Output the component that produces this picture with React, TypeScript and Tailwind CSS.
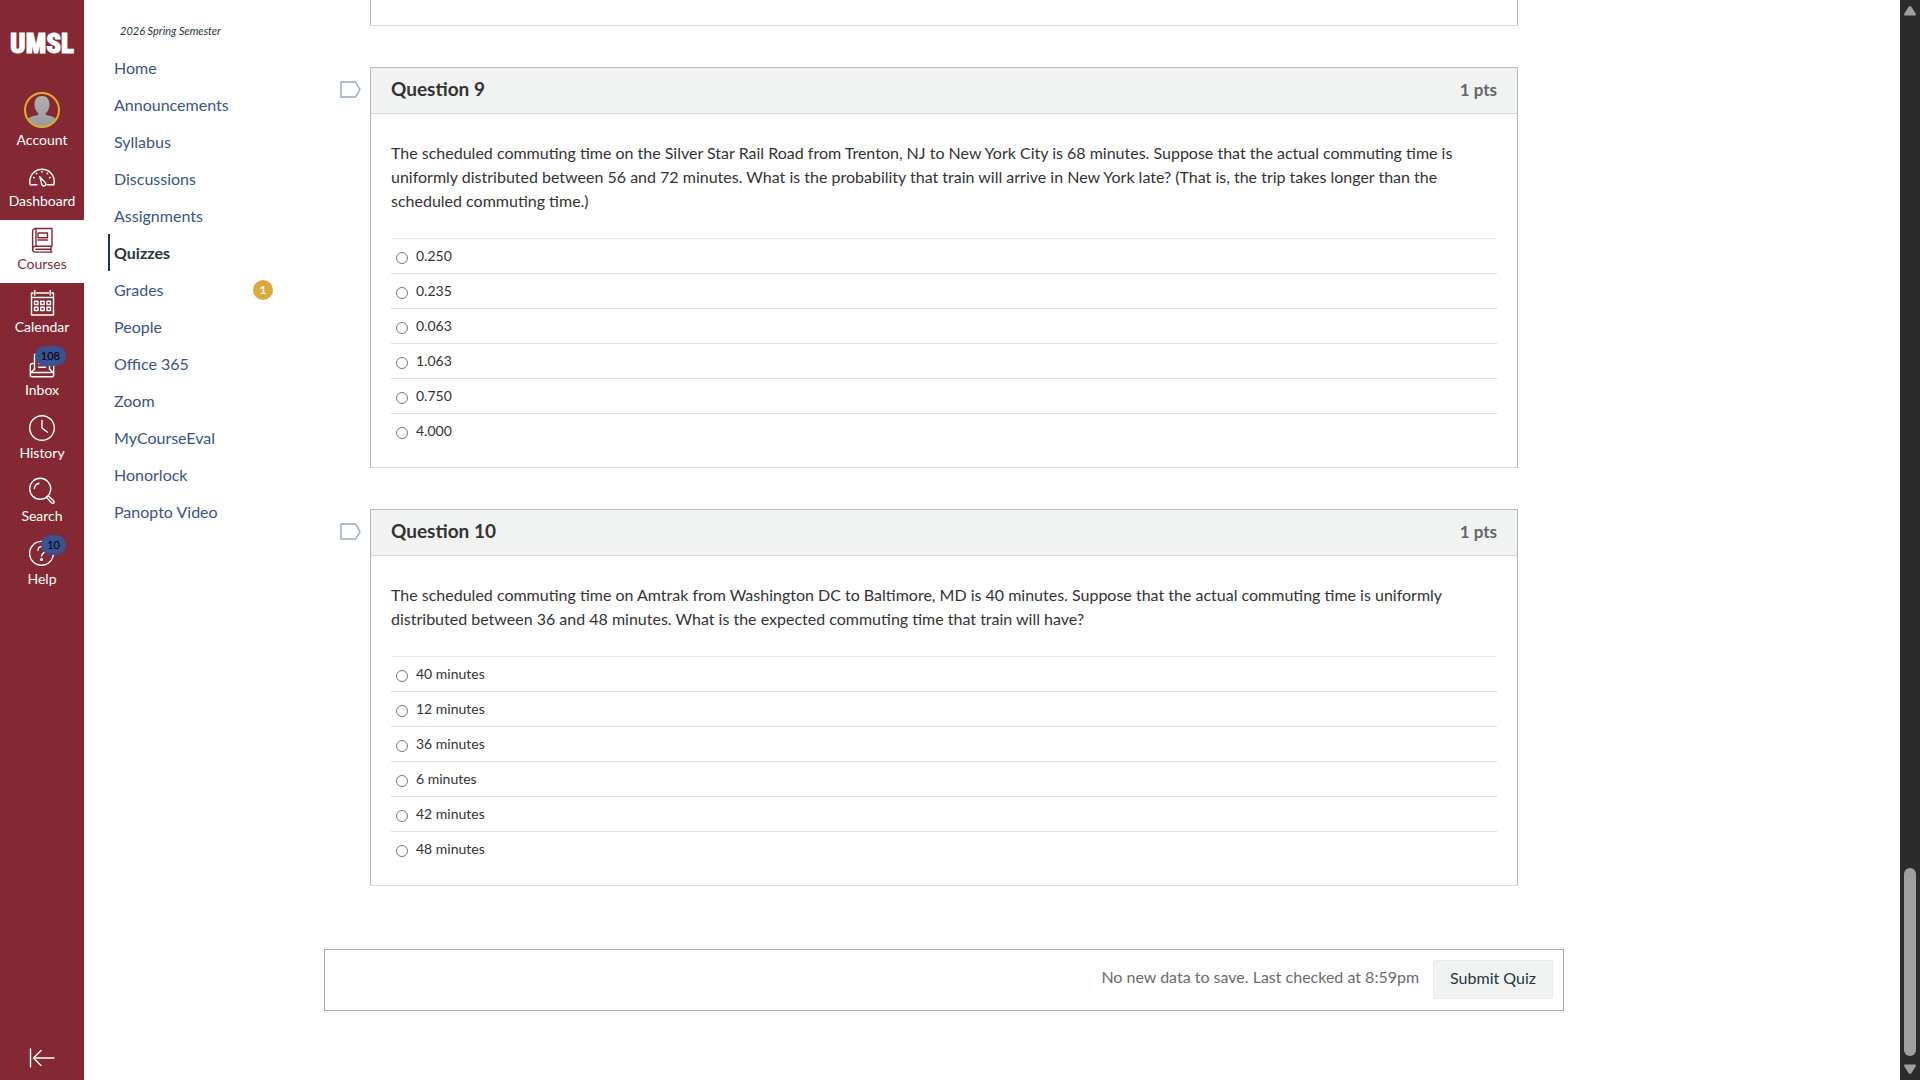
import type { ReactNode } from 'react';

interface RailItem {
    label: string;
    icon: ReactNode;
    active?: boolean;
    badge?: string;
}

interface CourseLink {
    label: string;
    active?: boolean;
    badge?: string;
}

interface Question {
    id: number;
    text: string;
    answers: string[];
}

function RailIcon({ children }: { children: ReactNode }) {
    return (
        <svg
            viewBox="0 0 26 26"
            className="h-[26px] w-[26px] overflow-visible"
            fill="none"
            stroke="currentColor"
            strokeWidth="1.4"
            strokeLinecap="round"
            strokeLinejoin="round"
            aria-hidden="true"
        >
            {children}
        </svg>
    );
}

const railItems: RailItem[] = [
    {
        label: 'Dashboard',
        icon: (
            <RailIcon>
                <path d="M8 21.8H1.3C.9 20.8.8 19.6.8 18.4.8 11.6 6.2 6.2 13 6.2s12.2 5.4 12.2 12.2c0 1.2-.1 2.4-.5 3.4H18" />
                <path d="M10.8 13.6l5.3 5.8c1 1.2.8 2.6-.2 3.3-1.1.7-2.5.3-3-1z" />
                <path d="M4.6 14.4l.7.4M7.3 10.2l.5.6M13 8.5v.8M18.6 10.2l-.5.6M21.3 14.4l-.7.4" />
            </RailIcon>
        ),
    },
    {
        label: 'Courses',
        active: true,
        icon: (
            <RailIcon>
                <path d="M7 20.3V2.5h16v17.8H6.3a2.900 2.900 0 0 0-2.700 2.900V5.500c0-1.800 1.300-3 3.400-3" />
                <path d="M3.600 23.200c0 1.700 1.200 2.900 3 2.900H23M22 20.300v5.800M7 23.200h15" />
                <path d="M9 7h9.500v4.800H9zM9 14h9.500" />
            </RailIcon>
        ),
    },
    {
        label: 'Calendar',
        icon: (
            <RailIcon>
                <path d="M4.200 4H2.500v22h22V4h-1.700M7.500 4h12M2.500 8.500h22M5.800 1.500V6M21.200 1.500V6" />
                <path d="M5.500 12.200H9v3.300H5.500zM11.700 12.200h3.500v3.300h-3.500zM18 12.200h3.500v3.300H18zM5.500 18.200H9v3.300H5.500zM11.700 18.200h3.500v3.300h-3.500zM18 18.200h3.500v3.300H18z" />
            </RailIcon>
        ),
    },
    {
        label: 'Inbox',
        badge: '108',
        icon: (
            <RailIcon>
                <path d="M5.500 17V2.500h15V17M5.500 11.500H3.300a2 2 0 0 0-2 2v9.200a2 2 0 0 0 2 2h19.400a2 2 0 0 0 2-2v-9.200a2 2 0 0 0-2-2h-2.200" />
                <path d="M5.500 17l-3.500 3.500h22L20.500 17M9.500 15.300h7M9.500 11.500h7" />
            </RailIcon>
        ),
    },
    {
        label: 'History',
        icon: (
            <RailIcon>
                <circle cx="13" cy="13" r="12.300" />
                <path d="M13 5.500V13l5.500 4.300" />
            </RailIcon>
        ),
    },
    {
        label: 'Search',
        icon: (
            <RailIcon>
                <circle cx="11.200" cy="10.800" r="10.500" />
                <path d="M5.300 10.500c.3-2.600 2-4.500 4.700-5.200" />
                <path d="M17.500 19.300l5 5.500c.6.7 1.600.7 2.200.1s.6-1.600-.1-2.200l-5.300-4.900" />
            </RailIcon>
        ),
    },
    {
        label: 'Help',
        badge: '10',
        icon: (
            <RailIcon>
                <circle cx="12.500" cy="12.300" r="11.900" />
                <path d="M9 9.300c0-2.300 1.400-3.700 3.600-3.700s3.700 1.400 3.700 3.400c0 2.900-3.700 3-3.700 6" />
                <circle cx="12.500" cy="18.500" r=".9" fill="currentColor" />
            </RailIcon>
        ),
    },
];

const courseLinks: CourseLink[] = [
    { label: 'Home' },
    { label: 'Announcements' },
    { label: 'Syllabus' },
    { label: 'Discussions' },
    { label: 'Assignments' },
    { label: 'Quizzes', active: true },
    { label: 'Grades', badge: '1' },
    { label: 'People' },
    { label: 'Office 365' },
    { label: 'Zoom' },
    { label: 'MyCourseEval' },
    { label: 'Honorlock' },
    { label: 'Panopto Video' },
];

const questions: Question[] = [
    {
        id: 9,
        text: 'The scheduled commuting time on the Silver Star Rail Road from Trenton, NJ to New York City is 68 minutes. Suppose that the actual commuting time is uniformly distributed between 56 and 72 minutes. What is the probability that train will arrive in New York late? (That is, the trip takes longer than the scheduled commuting time.)',
        answers: ['0.250', '0.235', '0.063', '1.063', '0.750', '4.000'],
    },
    {
        id: 10,
        text: 'The scheduled commuting time on Amtrak from Washington DC to Baltimore, MD is 40 minutes. Suppose that the actual commuting time is uniformly distributed between 36 and 48 minutes. What is the expected commuting time that train will have?',
        answers: ['40 minutes', '12 minutes', '36 minutes', '6 minutes', '42 minutes', '48 minutes'],
    },
];

function GlobalRail() {
    return (
        <nav className="sticky top-0 flex h-screen w-[84px] shrink-0 flex-col bg-[#842933] text-white">
            <a href="#home" className="flex h-[84px] items-center justify-center" aria-label="UMSL home">
                <svg viewBox="0 0 84 84" className="h-[84px] w-[84px]" aria-hidden="true">
                    <text
                        x="42"
                        y="53"
                        textAnchor="middle"
                        className="fill-white stroke-white stroke-1 font-['Liberation_Sans_Narrow','Roboto_Condensed',Roboto,sans-serif] text-[27px] font-black"
                    >
                        UMSL
                    </text>
                </svg>
            </a>
            <a href="#account" className="flex h-[73px] flex-col items-center pt-2">
                <svg viewBox="0 0 36 36" className="h-9 w-9" aria-hidden="true">
                    <defs>
                        <linearGradient id="person" x1="0" y1="0" x2="0" y2="1">
                            <stop offset="0" stopColor="#b0b0b0" />
                            <stop offset="1" stopColor="#999999" />
                        </linearGradient>
                        <clipPath id="avatar">
                            <circle cx="18" cy="18" r="16.500" />
                        </clipPath>
                    </defs>
                    <g clipPath="url(#avatar)" fill="url(#person)">
                        <path d="M18 4c4.600 0 7.500 3.400 7.500 8.500 0 3.800-1.500 7-3.600 8.600v1.800c4.100.9 8.800 1.800 11.100 4.600V36H3v-8.500c2.300-2.800 7-3.700 11.100-4.600v-1.800c-2.100-1.600-3.600-4.800-3.600-8.600C10.500 7.400 13.400 4 18 4z" />
                    </g>
                    <circle cx="18" cy="18" r="17" fill="none" stroke="#dfab35" strokeWidth="2" />
                </svg>
                <span className="mt-0.5 text-sm leading-5">Account</span>
            </a>
            {railItems.map((item) => (
                <a
                    key={item.label}
                    href={`#${item.label.toLowerCase()}`}
                    className={`relative flex h-[63px] flex-col items-center pt-1.5 ${item.active ? 'bg-white text-[#842933]' : ''}`}
                >
                    {item.icon}
                    <span className="mt-0.5 text-sm leading-5">{item.label}</span>
                    {item.badge && (
                        <span className="absolute top-0 right-[18px] rounded-full bg-[#38538f] px-1.5 text-[11px] leading-5 text-black">
                            {item.badge}
                        </span>
                    )}
                </a>
            ))}
            <button type="button" aria-label="Minimize global navigation" className="mt-auto flex h-11 items-center justify-center">
                <RailIcon>
                    <path d="M1.500 4v18M5 13h20M12 5.500L4.500 13l7.500 7.500" />
                </RailIcon>
            </button>
        </nav>
    );
}

function CourseNav() {
    return (
        <nav className="w-60 shrink-0 pr-[51px] pl-6">
            <p className="pt-[21px] pl-3 text-[11px] leading-5 text-[#273540] italic">2026 Spring Semester</p>
            <ul className="mt-2">
                {courseLinks.map((link) => (
                    <li key={link.label}>
                        <a
                            href={`#${link.label.toLowerCase()}`}
                            className={`flex h-[37px] items-center justify-between border-l-2 pl-1 text-base ${link.active
                                ? 'border-[#273540] font-bold text-[#273540]'
                                : 'border-transparent text-[#38538f]'
                                }`}
                        >
                            {link.label}
                            {link.badge && (
                                <span className="h-5 w-5 rounded-full bg-[#dbaa3a] text-center text-xs leading-5 font-bold text-white">
                                    {link.badge}
                                </span>
                            )}
                        </a>
                    </li>
                ))}
            </ul>
        </nav>
    );
}

function QuestionCard({ question }: { question: Question }) {
    return (
        <section className="relative mx-[46px] mt-[41px] border border-[#b5b8ba] border-b-[#d8d8d8] text-[#333333]">
            <button type="button" aria-label={`Flag question ${question.id}`} className="absolute top-[13px] -left-[31px]">
                <svg viewBox="0 0 21 17" className="h-[17px] w-[21px]" fill="white" stroke="#93a9c2" strokeWidth="1.400">
                    <path d="M1 1h14.500l4.500 7.500-4.500 7.500H1z" />
                </svg>
            </button>
            <header className="flex h-[46px] items-center justify-between border-b border-[#d5d8d8] bg-[#f1f3f3] px-5 pb-0.5">
                <h2 id={`question-${question.id}-title`} className="text-[19px] font-bold">
                    Question {question.id}
                </h2>
                <span className="text-[17px] font-bold text-[#666666]">1 pts</span>
            </header>
            <div role="radiogroup" aria-labelledby={`question-${question.id}-title`} className="px-5 pt-[27px] pb-[19px]">
                <p className="mb-[25px] text-base leading-6">{question.text}</p>
                {question.answers.map((answer) => (
                    <label
                        key={answer}
                        className="flex h-[35px] items-center gap-2 border-t border-[#dddddd] pl-[5px] text-sm first-of-type:border-[#eeeeee]"
                    >
                        <input
                            type="radio"
                            name={`question-${question.id}`}
                            className="mt-1 h-3 w-3 appearance-none rounded-full border border-[#767676] bg-white checked:border-4"
                        />
                        {answer}
                    </label>
                ))}
            </div>
        </section>
    );
}

function ScrollTrack() {
    return (
        <div className="sticky top-0 flex h-screen w-5 shrink-0 flex-col items-center bg-[#2b2b2b] py-1.5">
            <svg viewBox="0 0 12 10" className="h-[10px] w-3" fill="#9f9f9f" aria-hidden="true">
                <path d="M6 0c.6 0 1 .3 1.300.8l4.300 6.700C12.200 8.600 11.800 9.500 10.700 9.500H1.300C.2 9.500-.2 8.600.4 7.500L4.700.8C5 .3 5.400 0 6 0z" />
            </svg>
            <div className="mt-auto h-[188px] w-3 rounded-full bg-[#9f9f9f]" />
            <svg viewBox="0 0 12 10" className="mt-2 h-[10px] w-3" fill="#9f9f9f" aria-hidden="true">
                <path d="M6 10c-.6 0-1-.3-1.300-.8L.4 2.500C-.2 1.400.2.5 1.300.5h9.400c1.100 0 1.500.9.9 2L7.300 9.200C7 9.700 6.600 10 6 10z" />
            </svg>
        </div>
    );
}

export default function App() {
    return (
        <div className="flex min-h-screen bg-white font-[Lato,sans-serif]">
            <GlobalRail />
            <CourseNav />
            <main className="min-w-0 flex-1">
                {/* Tail of the previous question */}
                <div className="mx-[46px] h-[26px] border border-t-0 border-[#b5b8ba] border-b-[#d8d8d8]" />
                {questions.map((question) => (
                    <QuestionCard key={question.id} question={question} />
                ))}
                <div className="mt-[63px] flex h-[62px] items-start justify-end gap-[14px] border border-[#a9acae] p-[10px]">
                    <span className="text-base leading-[34px] text-[#6b6b6b]">No new data to save. Last checked at 8:59pm</span>
                    <button
                        type="submit"
                        className="h-[39px] rounded-xs border border-[#e8eaea] bg-[#f1f3f3] px-4 pb-1 text-base text-[#273540]"
                    >
                        Submit Quiz
                    </button>
                </div>
            </main>
            <aside className="w-[336px] shrink-0" />
            <ScrollTrack />
        </div>
    );
}
